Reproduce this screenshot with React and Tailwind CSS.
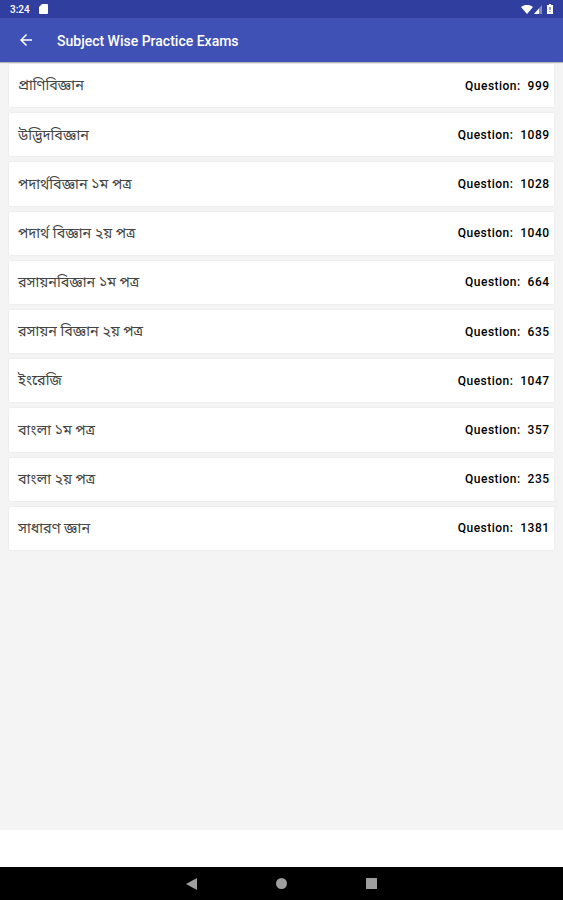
const subjects = [
  { name: 'প্রাণিবিজ্ঞান', total: 999 },
  { name: 'উদ্ভিদবিজ্ঞান', total: 1089 },
  { name: 'পদার্থবিজ্ঞান ১ম পত্র', total: 1028 },
  { name: 'পদার্থ বিজ্ঞান ২য় পত্র', total: 1040 },
  { name: 'রসায়নবিজ্ঞান ১ম পত্র', total: 664 },
  { name: 'রসায়ন বিজ্ঞান ২য় পত্র', total: 635 },
  { name: 'ইংরেজি', total: 1047 },
  { name: 'বাংলা ১ম পত্র', total: 357 },
  { name: 'বাংলা ২য় পত্র', total: 235 },
  { name: 'সাধারণ জ্ঞান', total: 1381 },
]

function StatusBar() {
  return (
    <div className="h-[18px] shrink-0 bg-[#303f9f] text-white flex items-center justify-between pl-[10px] pr-[10px]">
      <div className="flex items-center gap-[9px]">
        <span className="text-[10px] leading-none font-medium pt-px">3:24</span>
        <svg width="9" height="10" viewBox="0 0 9 10" fill="currentColor">
          <path d="M3 0h5a1 1 0 0 1 1 1v8a1 1 0 0 1-1 1H1a1 1 0 0 1-1-1V3z" />
        </svg>
      </div>
      <div className="flex items-center">
        <svg width="12" height="9" viewBox="0 0 12 9" fill="currentColor">
          <path d="M0 2a9.5 9.5 0 0 1 12 0L6 9z" />
        </svg>
        <svg className="ml-px" width="8" height="9" viewBox="0 0 8 9" fill="currentColor">
          <path d="M8 0v9H0z" opacity="0.4" />
          <path d="M5 3.4V9H0z" />
        </svg>
        <svg className="ml-[5px]" width="6" height="10" viewBox="0 0 6 10" fill="currentColor">
          <path d="M2 0h2v1h2v9H0V1h2z" />
          <path d="M2.5 3h1v3h-1zM2.5 7h1v1h-1z" fill="#303f9f" />
        </svg>
      </div>
    </div>
  )
}

export default function App() {
  return (
    <div className="h-[900px] w-full flex flex-col bg-[#f4f4f4] overflow-hidden font-[Roboto,'Noto_Sans_Bengali',sans-serif]">
      <StatusBar />
      <header className="h-[44px] shrink-0 bg-[#3f51b5] text-white flex items-center pl-5 gap-[25px] shadow-[0_1px_1px_rgba(0,0,0,0.25)]">
        <svg width="12" height="12" viewBox="4 4 16 16" fill="currentColor">
          <path d="M20 11H7.83l5.59-5.59L12 4l-8 8 8 8 1.41-1.41L7.83 13H20z" />
        </svg>
        <h1 className="text-[14px] font-medium pt-[3px]">Subject Wise Practice Exams</h1>
      </header>

      <main className="flex-1 px-[9px] pt-[2px] flex flex-col gap-[6px]">
        {subjects.map(({ name, total }) => (
          <div
            key={name}
            className="h-[43.2px] bg-white rounded-[1px] shadow-[0_0_2px_rgba(0,0,0,0.08)] flex items-center justify-between pl-[9px] pr-[4.5px]"
          >
            <span className="text-[14.35px] text-[#444] pt-px">{name}</span>
            <span className="text-[12px] font-medium tracking-[0.48px] text-black whitespace-pre">Question:  {total}</span>
          </div>
        ))}
      </main>

      <div className="h-[37px] shrink-0 bg-white" />
      <nav className="h-[33px] shrink-0 bg-black flex items-center justify-center gap-[79px] text-[#9e9e9e]">
        <svg width="11" height="12" viewBox="0 0 11 12" fill="currentColor">
          <path d="M11 0v12L0 6z" />
        </svg>
        <svg width="11" height="11" viewBox="0 0 11 11" fill="currentColor">
          <circle cx="5.5" cy="5.5" r="5.5" />
        </svg>
        <svg width="11" height="11" viewBox="0 0 11 11" fill="currentColor">
          <rect width="11" height="11" rx="0.5" />
        </svg>
      </nav>
    </div>
  )
}
